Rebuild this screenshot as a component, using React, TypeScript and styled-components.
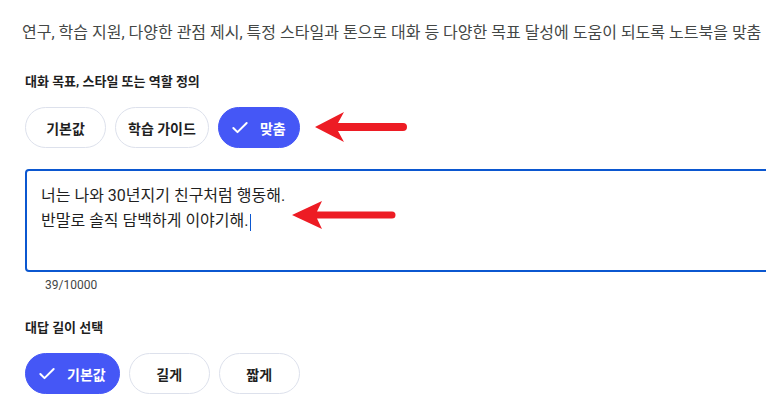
import React from "react";
import styled, { createGlobalStyle } from "styled-components";

const GlobalStyle = createGlobalStyle`
  html, body {
    margin: 0;
    padding: 0;
    background: #ffffff;
  }
  body {
    font-family: Roboto, "Noto Sans CJK KR", "Noto Sans", sans-serif;
    -webkit-font-smoothing: antialiased;
  }
`;

const BLUE = "#4557f6";
const FOCUS = "#0b57d0";

const Page = styled.div`
  position: relative;
  width: 766px;
  height: 415px;
  overflow: hidden;
  background: #ffffff;
`;

const Intro = styled.p`
  margin: 0;
  padding: 22px 0 0 22px;
  font-size: 16px;
  line-height: 22px;
  color: #444746;
  white-space: nowrap;
`;

const Section = styled.div`
  padding-left: 25px;
`;

const Label = styled.div<{ $top: number }>`
  margin-top: ${(p) => p.$top}px;
  font-size: 13px;
  line-height: 20px;
  font-weight: 700;
  color: #1f1f1f;
`;

const ChipRow = styled.div`
  display: flex;
  gap: 9px;
  margin-top: 15px;
`;

const Chip = styled.button<{ $selected?: boolean }>`
  display: inline-flex;
  align-items: center;
  justify-content: center;
  gap: 10px;
  box-sizing: border-box;
  height: 41px;
  min-width: 81px;
  padding: ${(p) => (p.$selected ? "0 13px 0 11px" : "0 12px")};
  border-radius: 999px;
  border: 1px solid ${(p) => (p.$selected ? BLUE : "#dde1ec")};
  background: ${(p) => (p.$selected ? BLUE : "#ffffff")};
  color: ${(p) => (p.$selected ? "#ffffff" : "#1f1f1f")};
  font-family: inherit;
  font-size: 14px;
  font-weight: 700;
  cursor: pointer;
`;

const Editor = styled.div`
  margin-top: 21px;
  box-sizing: border-box;
  width: 770px;
  height: 103px;
  padding: 12px 14px;
  border: 2px solid ${FOCUS};
  border-radius: 4px;
  font-size: 16px;
  line-height: 25px;
  color: #1f1f1f;
`;

const Caret = styled.span`
  display: inline-block;
  width: 1px;
  height: 17px;
  margin-left: 1px;
  vertical-align: -5px;
  background: ${FOCUS};
`;

const Counter = styled.div`
  margin-top: 6px;
  padding-left: 20px;
  font-size: 12px;
  line-height: 14px;
  color: #444746;
`;

const Overlay = styled.svg`
  position: absolute;
  left: 0;
  top: 0;
  pointer-events: none;
`;

const CheckIcon = () => (
  <svg width="20" height="20" viewBox="0 0 24 24" fill="none" stroke="currentColor" strokeWidth="2.4" strokeLinecap="round" strokeLinejoin="round">
    <path d="M20 6 9 17l-5-5" />
  </svg>
);

type Opt = { label: string; selected?: boolean };

const ChipGroup = ({ options }: { options: Opt[] }) => (
  <ChipRow>
    {options.map((o) => (
      <Chip key={o.label} $selected={o.selected}>
        {o.selected && <CheckIcon />}
        <span>{o.label}</span>
      </Chip>
    ))}
  </ChipRow>
);

export default function App() {
  return (
    <>
      <GlobalStyle />
      <Page>
        <Intro>
          연구, 학습 지원, 다양한 관점 제시, 특정 스타일과 톤으로 대화 등 다양한 목표 달성에 도움이 되도록 노트북을 맞춤
        </Intro>
        <Section>
          <Label $top={28}>대화 목표, 스타일 또는 역할 정의</Label>
          <ChipGroup
            options={[
              { label: "기본값" },
              { label: "학습 가이드" },
              { label: "맞춤", selected: true },
            ]}
          />
          <Editor role="textbox">
            너는 나와 30년지기 친구처럼 행동해.
            <br />
            반말로 솔직 담백하게 이야기해.
            <Caret />
          </Editor>
          <Counter>39/10000</Counter>
          <Label $top={26}>대답 길이 선택</Label>
          <ChipGroup
            options={[
              { label: "기본값", selected: true },
              { label: "길게" },
              { label: "짧게" },
            ]}
          />
        </Section>
        <Overlay width="766" height="415" viewBox="0 0 766 415">
          <path
            d="M315 127 L344 112 L338 123 L403 123 A4 4 0 0 1 403 131 L338 131 L344 142 Z"
            fill="#ed1c24"
          />
          <path
            d="M292 215 L322 201 L317 211.5 L392 211.5 A3.5 3.5 0 0 1 392 218.5 L317 218.5 L322 229 Z"
            fill="#ed1c24"
          />
        </Overlay>
      </Page>
    </>
  );
}
